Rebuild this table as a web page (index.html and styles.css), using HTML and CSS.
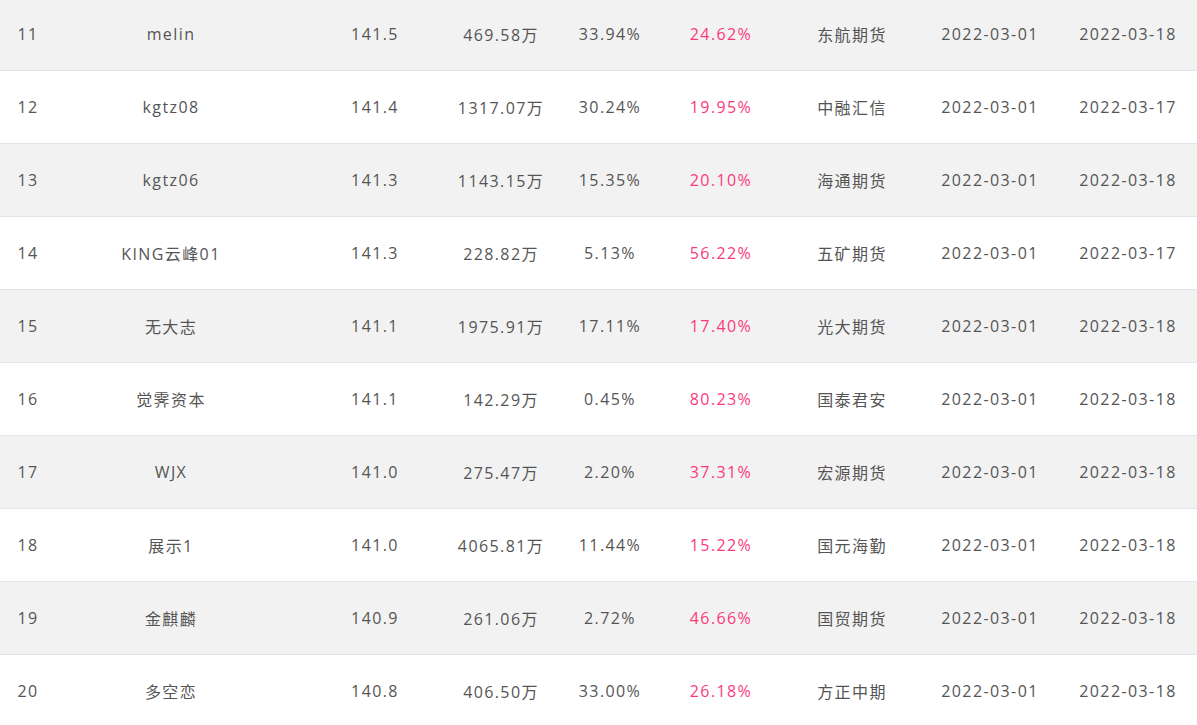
FILE: index.html
```html
<!DOCTYPE html>
<html lang="zh-CN">
<head>
<meta charset="utf-8">
<title>排行</title>
<link rel="stylesheet" href="styles.css">
</head>
<body>
<div class="table">
  <div class="row odd"><div class="c">11</div><div class="c">melin</div><div class="c">141.5</div><div class="c">469.58万</div><div class="c">33.94%</div><div class="c pink">24.62%</div><div class="c">东航期货</div><div class="c">2022-03-01</div><div class="c">2022-03-18</div></div>
  <div class="row"><div class="c">12</div><div class="c">kgtz08</div><div class="c">141.4</div><div class="c">1317.07万</div><div class="c">30.24%</div><div class="c pink">19.95%</div><div class="c">中融汇信</div><div class="c">2022-03-01</div><div class="c">2022-03-17</div></div>
  <div class="row odd"><div class="c">13</div><div class="c">kgtz06</div><div class="c">141.3</div><div class="c">1143.15万</div><div class="c">15.35%</div><div class="c pink">20.10%</div><div class="c">海通期货</div><div class="c">2022-03-01</div><div class="c">2022-03-18</div></div>
  <div class="row"><div class="c">14</div><div class="c">KING云峰01</div><div class="c">141.3</div><div class="c">228.82万</div><div class="c">5.13%</div><div class="c pink">56.22%</div><div class="c">五矿期货</div><div class="c">2022-03-01</div><div class="c">2022-03-17</div></div>
  <div class="row odd"><div class="c">15</div><div class="c">无大志</div><div class="c">141.1</div><div class="c">1975.91万</div><div class="c">17.11%</div><div class="c pink">17.40%</div><div class="c">光大期货</div><div class="c">2022-03-01</div><div class="c">2022-03-18</div></div>
  <div class="row"><div class="c">16</div><div class="c">觉霁资本</div><div class="c">141.1</div><div class="c">142.29万</div><div class="c">0.45%</div><div class="c pink">80.23%</div><div class="c">国泰君安</div><div class="c">2022-03-01</div><div class="c">2022-03-18</div></div>
  <div class="row odd"><div class="c">17</div><div class="c">WJX</div><div class="c">141.0</div><div class="c">275.47万</div><div class="c">2.20%</div><div class="c pink">37.31%</div><div class="c">宏源期货</div><div class="c">2022-03-01</div><div class="c">2022-03-18</div></div>
  <div class="row"><div class="c">18</div><div class="c">展示1</div><div class="c">141.0</div><div class="c">4065.81万</div><div class="c">11.44%</div><div class="c pink">15.22%</div><div class="c">国元海勤</div><div class="c">2022-03-01</div><div class="c">2022-03-18</div></div>
  <div class="row odd"><div class="c">19</div><div class="c">金麒麟</div><div class="c">140.9</div><div class="c">261.06万</div><div class="c">2.72%</div><div class="c pink">46.66%</div><div class="c">国贸期货</div><div class="c">2022-03-01</div><div class="c">2022-03-18</div></div>
  <div class="row"><div class="c">20</div><div class="c">多空恋</div><div class="c">140.8</div><div class="c">406.50万</div><div class="c">33.00%</div><div class="c pink">26.18%</div><div class="c">方正中期</div><div class="c">2022-03-01</div><div class="c">2022-03-18</div></div>
</div>
</body>
</html>
```
FILE: styles.css
```css
html, body {
  margin: 0;
  padding: 0;
  overflow: hidden;
  background: #fff;
}
body {
  font-family: "Open Sans", "Noto Sans CJK SC", sans-serif;
  font-size: 16px;
  letter-spacing: 1.4px;
  color: #555;
}
.table {
  margin-top: -2px;
}
.row {
  display: grid;
  grid-template-columns: 56px 230px 178px 74px 144px 78px 184px 92px 184px;
  height: 72px;
  border-bottom: 1px solid #e3e3e8;
  background: #fff;
}
.row.odd {
  background: #f2f2f2;
}
.c {
  display: flex;
  align-items: center;
  justify-content: center;
  white-space: nowrap;
}
.pink {
  color: #fb3a7b;
}
```
